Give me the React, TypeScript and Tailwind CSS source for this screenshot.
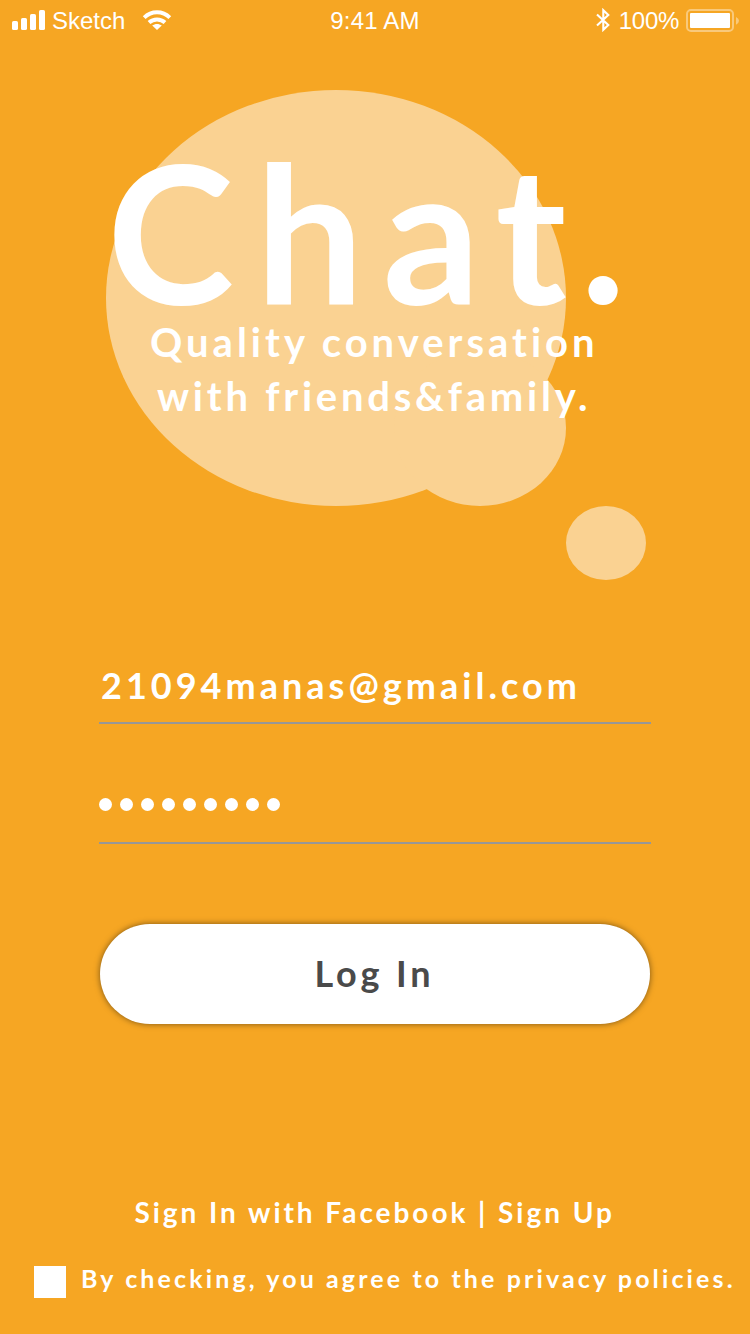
function StatusBar() {
  return (
    <header className="flex h-10 items-center px-3 font-['Liberation_Sans',sans-serif] text-[24px] leading-[28px]">
      <div className="flex flex-1 items-center">
        <svg width="33" height="20" viewBox="0 0 33 20" fill="currentColor">
          <rect x="0" y="11" width="6" height="9" rx="1.6" />
          <rect x="9" y="8" width="6" height="12" rx="1.6" />
          <rect x="18" y="4" width="6" height="16" rx="1.6" />
          <rect x="27" y="0" width="6" height="20" rx="1.6" />
        </svg>
        <span className="ml-[7px] pt-0.5">Sketch</span>
        <svg className="ml-[17px]" width="30" height="21" viewBox="0 0 30 21" fill="none" stroke="currentColor" strokeWidth="4">
          <path d="M2.2 7.6C9.4 0.6 20.6 0.6 27.8 7.6" />
          <path d="M7 12.6C11.5 8.5 18.5 8.5 23 12.6" />
          <path d="M15 20L10.2 15.6C13 13.4 17 13.4 19.8 15.6Z" fill="currentColor" stroke="none" />
        </svg>
      </div>
      <span className="pt-0.5 tracking-[0.2px]">9:41 AM</span>
      <div className="flex flex-1 items-center justify-end">
        <svg width="14" height="24" viewBox="0 0 14 24" fill="none" stroke="currentColor" strokeWidth="2.1">
          <path d="M1 6.5L12.3 17L7.3 21.8V2.2L12.3 7L1 17.5" />
        </svg>
        <span className="ml-[9px] pt-0.5 tracking-[-0.3px]">100%</span>
        <svg className="-mr-px ml-[7px]" width="53" height="23" viewBox="0 0 53 23">
          <rect x="1" y="1" width="46" height="21" rx="4" fill="none" stroke="currentColor" strokeWidth="2" opacity="0.4" />
          <rect x="4" y="4" width="40" height="15" rx="1" fill="currentColor" />
          <path d="M50 8Q53 9.5 53 11.8Q53 14.2 50 15.8Z" fill="currentColor" opacity="0.4" />
        </svg>
      </div>
    </header>
  );
}

function Bubbles() {
  return (
    <svg className="absolute left-[106px] top-[90px]" width="540" height="490" viewBox="0 0 540 490" fill="#fad292">
      <ellipse cx="230" cy="208" rx="230" ry="208" />
      <ellipse cx="374" cy="338" rx="86" ry="78" />
      <ellipse cx="500" cy="453" rx="40" ry="37" />
    </svg>
  );
}

export default function App() {
  return (
    <main className="relative flex h-[1334px] w-[750px] flex-col overflow-hidden bg-[#f6a623] font-['Lato',sans-serif] font-bold text-white">
      <Bubbles />
      <div className="relative font-normal">
        <StatusBar />
      </div>

      <section className="relative mt-[89px] h-[296px]">
        <h1 className="ml-[107px] h-[186px] whitespace-nowrap text-[192px] leading-[201px]">
          <span className="tracking-[21.5px]">C</span>
          <span className="tracking-[19px]">h</span>
          <span className="tracking-[15px]">a</span>
          <span className="tracking-[13.5px]">t</span>
          <span>.</span>
        </h1>
        <p className="whitespace-nowrap text-[40px] leading-[54px]">
          <span className="ml-[150px] block tracking-[4px]">Quality conversation</span>
          <span className="ml-[157px] block tracking-[3.75px]">with friends&amp;family.</span>
        </p>
      </section>

      <form className="ml-[99px] mt-[237px] flex w-[552px] flex-col">
        <div className="h-[62px] whitespace-nowrap border-b-2 border-[#979797] pl-0.5 text-[36px] leading-[46px] tracking-[4.02px]">
          21094manas@gmail.com
        </div>
        <div className="flex h-[120px] gap-[8.5px] border-b-2 border-[#979797] pt-[74px]">
          {Array.from({ length: 9 }, (_, i) => (
            <span key={i} className="h-[13px] w-[12.5px] rounded-full bg-white" />
          ))}
        </div>
        <button
          type="button"
          className="mx-px mt-20 h-[100px] rounded-full bg-white pb-0.5 pr-px text-[36px] leading-[44px] tracking-[3.9px] text-[#4a4a4a] shadow-[0_0_6px_rgba(0,0,0,0.5)]"
        >
          Log In
        </button>
      </form>

      <footer className="mt-[172px]">
        <p className="ml-[134.5px] whitespace-nowrap text-[28px] leading-8 tracking-[2.95px]">Sign In with Facebook | Sign Up</p>
        <label className="ml-[34px] mt-[34px] flex gap-[15px]">
          <span className="mt-1 size-8 shrink-0 bg-white" />
          <span className="whitespace-nowrap text-[25px] leading-8 tracking-[3.12px]">
            By checking, you agree to the privacy policies.
          </span>
        </label>
      </footer>
    </main>
  );
}
